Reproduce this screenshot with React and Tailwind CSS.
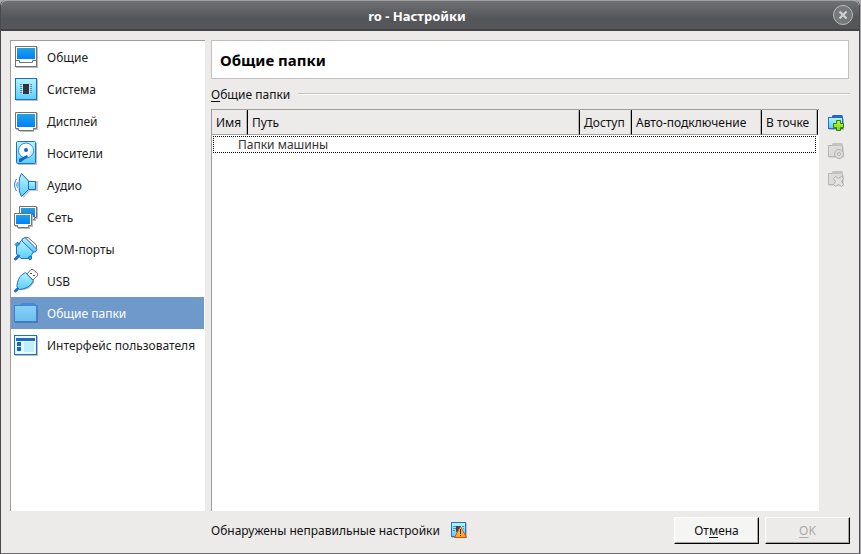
import React from "react";

function Gradients() {
  return (
    <svg className="absolute h-0 w-0" aria-hidden="true">
      <defs>
        <linearGradient id="screen" x1="0" y1="0" x2="0" y2="1">
          <stop offset="0" stopColor="#22a2e0" />
          <stop offset="1" stopColor="#0080ff" />
        </linearGradient>
        <linearGradient id="cyan" x1="0" y1="0" x2="0" y2="1">
          <stop offset="0" stopColor="#b4f4ff" />
          <stop offset="1" stopColor="#5ccdfb" />
        </linearGradient>
        <linearGradient id="folder" x1="0" y1="0" x2="0" y2="1">
          <stop offset="0" stopColor="#86d2f6" />
          <stop offset="1" stopColor="#6dbdf0" />
        </linearGradient>
        <linearGradient id="warn" x1="0" y1="0" x2="0" y2="1">
          <stop offset="0" stopColor="#ffd95e" />
          <stop offset="1" stopColor="#ff9a1f" />
        </linearGradient>
        <linearGradient id="plus" x1="0" y1="0" x2="0" y2="1">
          <stop offset="0" stopColor="#c6f53a" />
          <stop offset="1" stopColor="#7fd800" />
        </linearGradient>
      </defs>
    </svg>
  );
}

function Icon({ children }) {
  return (
    <svg width="26" height="26" viewBox="0 0 26 26" className="shrink-0" aria-hidden="true">
      {children}
    </svg>
  );
}

const GeneralIcon = () => (
  <Icon>
    <path d="M3 3h22v21H3z" fill="#bdbdbd" />
    <rect x="2.5" y="2.5" width="21" height="20" fill="#fff" stroke="#727272" />
    <rect x="4" y="4" width="18" height="11" fill="url(#screen)" />
    <path d="M2.5 16.5h4v2h13v-2h4" fill="none" stroke="#727272" />
  </Icon>
);

const SystemIcon = () => (
  <Icon>
    <path d="M3 3h22v22H3z" fill="#bdbdbd" />
    <rect x="2.5" y="2.5" width="21" height="21" fill="url(#cyan)" stroke="#1e6fcb" />
    <path d="M7 8.5h12M7 10.5h12M7 12.5h12M7 14.5h12M7 16.5h12" stroke="#5b8fa8" />
    <path d="M9 8h8v10H9z" fill="#fff" opacity=".6" />
    <path d="M10 8h6v10h-6z" fill="#30343f" />
  </Icon>
);

const DisplayIcon = () => (
  <Icon>
    <path d="M3 5h22v17h-4v2H7v-2H3z" fill="#bdbdbd" />
    <path d="M2.5 4.5h21v16h-3v2h-15v-2h-3z" fill="#fff" stroke="#727272" />
    <rect x="4" y="6" width="18" height="13" fill="url(#screen)" />
  </Icon>
);

const StorageIcon = () => (
  <Icon>
    <path d="M5 3h19v22H5z" fill="#bdbdbd" />
    <rect x="3.5" y="1.5" width="19" height="22" rx="1" fill="url(#cyan)" stroke="#1e6fcb" />
    <circle cx="13" cy="10.5" r="7.5" fill="#fff" stroke="#3188dc" />
    <path d="M19 7a7 7 0 0 1-4 10z" fill="#cceefd" />
    <circle cx="13" cy="10" r="2" fill="#0d66c9" />
    <path d="M6 19l4-2 4-2 1 2-3 2-4 3H6z" fill="#0d66c9" />
  </Icon>
);

const AudioIcon = () => (
  <Icon>
    <path d="M10 3l7 6h8v10h-8l-7 7z" fill="#c6c6c6" />
    <path d="M15.500 9.500h7v8h-7z" fill="url(#cyan)" stroke="#1e6fcb" />
    <path d="M8.500 1.500L15.500 9v8.500l-7 7L6.500 20 6 13l.5-7z" fill="url(#cyan)" stroke="#1e6fcb" strokeLinejoin="round" />
    <path d="M3.500 7c-2.500 3.500-2.500 8.500 0 12M4.500 10.500c-.8 2-.8 3.500 0 5" fill="none" stroke="#1e6fcb" />
  </Icon>
);

const NetworkIcon = () => (
  <Icon>
    <path d="M7 3h18v12h-2v2H7z" fill="#bdbdbd" />
    <path d="M6.5 2.5h17v11h-2v2h-15z" fill="#fff" stroke="#727272" />
    <path d="M8 4h14v9H8z" fill="url(#screen)" />
    <path d="M2 11h18v12h-3v2H5v-2H2z" fill="#bdbdbd" />
    <path d="M1.5 9.5h17v12h-3v2h-11v-2h-3z" fill="#fff" stroke="#727272" />
    <path d="M3 11h14v9H3z" fill="url(#screen)" />
  </Icon>
);

const SerialIcon = () => (
  <Icon>
    <path d="M12 1.500h3L23.500 9v4l-2 1z" fill="#f4f4f4" stroke="#727272" />
    <path d="M9 3l3-1.500L24 13.500 22.500 16H20L9 6z" fill="url(#cyan)" stroke="#1e6fcb" />
    <path d="M8.500 4.500L20.500 16l-4.500 6.500H8L3.500 18v-7.500z" fill="url(#cyan)" stroke="#1e6fcb" strokeLinejoin="round" />
    <path d="M2 8.500l2-2 3 1-3 3zM15.500 21l3-1v3l-2 1z" fill="#3aa5ec" stroke="#1e6fcb" strokeLinejoin="round" />
    <path d="M2.500 23l3-3" stroke="#1e6fcb" strokeWidth="3" strokeLinecap="round" />
  </Icon>
);

const UsbIcon = () => (
  <Icon>
    <path d="M14 6l4-4.500h2l4.500 4v2L20 12z" fill="#fff" stroke="#727272" strokeLinejoin="round" />
    <path d="M17 5h2v1h-2zM20 7h2v1h-2z" fill="#555" />
    <path d="M13.500 6l8 8-3 4c-3 3-6 4-10 4l-2-2c0-3 1-7 4-11z" fill="#bdbdbd" />
    <path d="M12.500 4.500l8 8.500-3 4c-3 3-7 4-11 4.500L4 19c0-4 1-8 4.500-12z" fill="url(#cyan)" stroke="#1e6fcb" strokeLinejoin="round" />
    <path d="M2.500 23l2-2" stroke="#1e6fcb" strokeWidth="3" strokeLinecap="round" />
  </Icon>
);

const FolderIcon = () => (
  <Icon>
    <path d="M2 7h23v16H2z" fill="#56779f" />
    <path d="M9 3h12l2 2h2v4H7V5z" fill="#4688da" />
    <rect x="1.5" y="5.5" width="22" height="16" fill="url(#folder)" stroke="#3c80d1" />
    <path d="M10 4h12l2 2H8z" fill="#4688da" />
  </Icon>
);

const InterfaceIcon = () => (
  <Icon>
    <path d="M2 4h23v20H2z" fill="#bdbdbd" />
    <rect x="1.5" y="3.5" width="22" height="19" fill="#e8fbff" stroke="#1e6fcb" />
    <path d="M3 6h19v3H3z" fill="#2468bf" />
    <path d="M4 10h4v4H4zM4 15h4v4H4z" fill="#1565c9" />
    <path d="M11 10h10v10H11z" fill="#bdf0fb" />
  </Icon>
);

const ToolFolder = ({ disabled, children }) => (
  <svg width="18" height="18" viewBox="0 0 18 18" aria-hidden="true">
    <path d="M2 4h15v11H2z" fill={disabled ? "#d5d5d4" : "#b5b5b5"} />
    <path d="M6 0h9l1 2v4H5V1z" fill={disabled ? "#c2c2c1" : "#2069cb"} />
    <rect x="1.5" y="2.5" width="14" height="11" fill={disabled ? "#dcdcdb" : "url(#cyan)"} stroke={disabled ? "#b4b4b3" : "#1e6fcb"} />
    <path d="M6 0h9l1 3H5z" fill={disabled ? "#c2c2c1" : "#2069cb"} />
    {children}
  </svg>
);

const AddFolderIcon = () => (
  <ToolFolder>
    <path d="M9.500 5.500h4v3h3v4h-3v3h-4v-3h-3v-4h3z" fill="url(#plus)" stroke="#2f8207" />
  </ToolFolder>
);

const EditFolderIcon = () => (
  <ToolFolder disabled>
    <circle cx="12" cy="11" r="4.5" fill="#dcdcdb" stroke="#b0b0af" />
    <circle cx="12" cy="11" r="1.5" fill="#ecebea" stroke="#b0b0af" />
  </ToolFolder>
);

const RemoveFolderIcon = () => (
  <ToolFolder disabled>
    <path d="M8.500 5.500l3 2 3-2 2 2-2 3 2 3-2 2-3-2-3 2-2-2 2-3-2-3z" fill="#e2e2e1" stroke="#adadac" />
  </ToolFolder>
);

const WarningIcon = () => (
  <svg width="17" height="17" viewBox="0 0 17 17" className="shrink-0" role="img" aria-label="Предупреждение">
    <path d="M1 1h15v15H1z" fill="#bdbdbd" />
    <rect x=".5" y=".5" width="14" height="14" fill="url(#cyan)" stroke="#1e78c8" />
    <path d="M2 4.500h3M2 6.500h3M2 8.500h2M11 4.500h2M12 6.500h1" stroke="#5b8fa8" />
    <path d="M5 4h5v6H5z" fill="#3c4657" />
    <path d="M9.500 4.500l6 11h-12z" fill="url(#warn)" stroke="#d8500d" strokeLinejoin="round" />
    <path d="M9 7h1v5H9zM9 13h1v1H9z" fill="#222" />
  </svg>
);

const categories = [
  ["Общие", GeneralIcon],
  ["Система", SystemIcon],
  ["Дисплей", DisplayIcon],
  ["Носители", StorageIcon],
  ["Аудио", AudioIcon],
  ["Сеть", NetworkIcon],
  ["COM-порты", SerialIcon],
  ["USB", UsbIcon],
  ["Общие папки", FolderIcon],
  ["Интерфейс пользователя", InterfaceIcon],
];

const columns = [
  ["Имя", "w-9"],
  ["Путь", ""],
  ["Доступ", "w-[52px]"],
  ["Авто-подключение", "w-[130px]"],
  ["В точке", "w-14"],
];

const tools = [
  ["Добавить общую папку", AddFolderIcon, false],
  ["Изменить общую папку", EditFolderIcon, true],
  ["Удалить общую папку", RemoveFolderIcon, true],
];

function TitleBar() {
  return (
    <header className="flex h-[31px] shrink-0 items-center rounded-t-md border-t border-b-2 border-t-[#a0a0a2] border-b-[#454346] bg-linear-to-b from-[#707175] to-[#55565a] to-60% pr-1.5">
      <h1 className="flex-1 pt-0.5 text-center text-[13px] leading-5 font-bold text-white">ro - Настройки</h1>
      <button type="button" aria-label="Закрыть" className="flex size-5 items-center justify-center rounded-full border border-[#bcbcbe] bg-[#77787b]">
        <svg width="10" height="10" viewBox="0 0 10 10" aria-hidden="true">
          <path d="M1.500 1.500l7 7M8.500 1.500l-7 7" stroke="#d0d0d1" strokeWidth="2.200" />
        </svg>
      </button>
    </header>
  );
}

function Sidebar() {
  return (
    <nav aria-label="Разделы" className="w-[195px] shrink-0 border-t border-l border-[#9f9e9d] bg-white pr-px">
      {categories.map(([label, CategoryIcon]) => {
        const current = label === "Общие папки";
        return (
          <button
            key={label}
            type="button"
            aria-current={current ? "page" : undefined}
            className={`flex h-8 w-full items-center gap-2 pl-0.5 text-left whitespace-nowrap ${current ? "bg-[#6f99cb] text-white" : "text-[#1d1d1d]"}`}
          >
            <CategoryIcon />
            <span className="pt-0.5">{label}</span>
          </button>
        );
      })}
    </nav>
  );
}

function FoldersTable() {
  return (
    <div className="min-w-0 flex-1 border-t border-l border-[#9f9e9d] bg-white pr-px">
      <table className="w-full table-fixed border-separate border-spacing-0">
        <thead>
          <tr>
            {columns.map(([label, width]) => (
              <th key={label} className={`h-[25px] border-r border-b border-r-black border-b-[#a3a2a1] bg-[#ecebea] p-0 text-left font-normal ${width}`}>
                <div className="h-6 border-r border-[#b5b4b3] pt-1 pl-1 leading-[18px] whitespace-nowrap">{label}</div>
              </th>
            ))}
          </tr>
        </thead>
        <tbody>
          <tr>
            <td colSpan={5} className="py-px pr-0.5 pl-px">
              <div className="h-[17px] border border-dotted border-black pl-6 leading-4 text-[#333]">Папки машины</div>
            </td>
          </tr>
        </tbody>
      </table>
    </div>
  );
}

function DialogButton({ disabled, children }) {
  return (
    <button
      type="button"
      disabled={disabled}
      className="h-[27px] w-[85px] border border-t-white border-r-black border-b-black border-l-white bg-[#f5f6f4] shadow-[inset_-1px_-1px_0_#a5a4a3] disabled:bg-[#ecebea] disabled:text-[#aaa9a8]"
    >
      {children}
    </button>
  );
}

export default function App() {
  return (
    <div className="h-screen bg-[#aaa9ab] pr-px font-['Noto_Sans','Open_Sans',sans-serif] text-[12px] leading-4 text-[#111]">
      <Gradients />
      <div className="flex h-full flex-col rounded-t-md border-r border-b border-l border-r-[#4b494d] border-b-[#6d6b75] border-l-[#4b494d] bg-[#ecebea]">
        <TitleBar />
        <div className="flex min-h-0 flex-1 gap-1.5 px-[9px] pt-[9px]">
          <Sidebar />
          <main className="flex min-w-0 flex-1 flex-col">
            <div className="mr-px h-[39px] border border-[#c1c0bf] bg-white px-2">
              <h2 className="text-[15px] leading-[38px] font-bold text-black">Общие папки</h2>
            </div>
            <fieldset className="flex min-h-0 min-w-0 flex-1 flex-col">
              <legend className="flex h-[30px] w-full items-center gap-2">
                <span className="pt-0.5">
                  <span className="underline underline-offset-2">О</span>бщие папки
                </span>
                <span className="h-0.5 flex-1 border-t border-b border-t-[#c3c2c1] border-b-white" />
              </legend>
              <div className="flex min-h-0 flex-1">
                <FoldersTable />
                <div className="flex w-[31px] flex-col items-start gap-2.5 pt-1.5 pl-2">
                  {tools.map(([label, ToolIcon, disabled]) => (
                    <button key={label} type="button" aria-label={label} disabled={disabled}>
                      <ToolIcon />
                    </button>
                  ))}
                </div>
              </div>
            </fieldset>
          </main>
        </div>
        <footer className="flex h-[42px] shrink-0 items-start justify-end gap-1.5 pt-1.5 pr-[9px] pl-[210px]">
          <p className="flex h-[27px] flex-1 items-center gap-[11px]">
            Обнаружены неправильные настройки
            <WarningIcon />
          </p>
          <DialogButton>
            От<span className="underline underline-offset-2">м</span>ена
          </DialogButton>
          <DialogButton disabled>
            <span className="underline underline-offset-2">O</span>K
          </DialogButton>
        </footer>
      </div>
    </div>
  );
}
